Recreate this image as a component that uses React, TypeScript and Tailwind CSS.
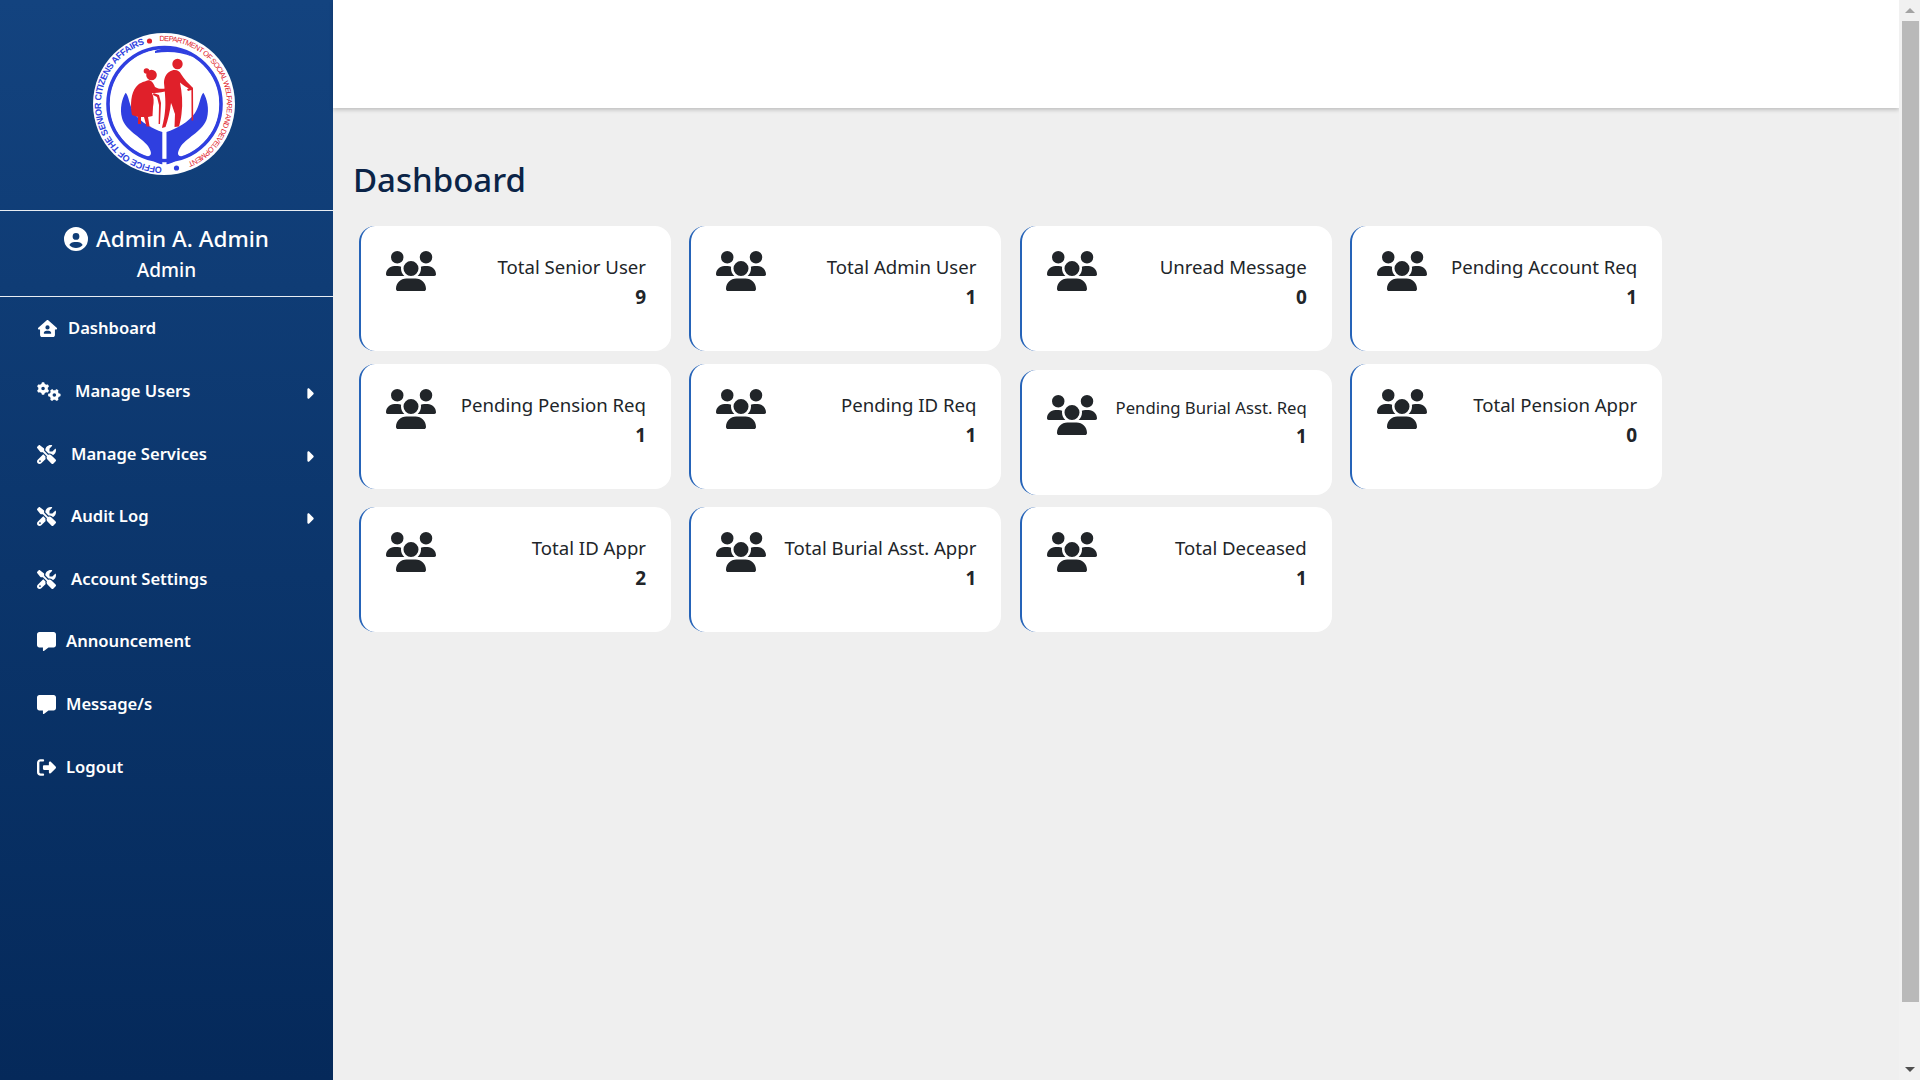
import React from "react";
import {
    FaCaretRight,
    FaCircleUser,
    FaGears,
    FaHouseUser,
    FaMessage,
    FaRightFromBracket,
    FaScrewdriverWrench,
    FaUsers,
} from "react-icons/fa6";

function Logo() {
    return (
        <svg width="142" height="142" viewBox="0 0 142 142" fill="none">
            <circle cx="71" cy="71" r="71" fill="white" />
            <path id="logo-ring" d="M71 134A63 63 0 1 1 71 8A63 63 0 1 1 71 134" />
            <text fontFamily="'Liberation Sans', sans-serif" fontSize="9" fontWeight="700" fill="#2f3fe0">
                <textPath href="#logo-ring" startOffset="2" textLength="176">
                    OFFICE OF THE SENIOR CITIZENS AFFAIRS
                </textPath>
            </text>
            <text fontFamily="'Liberation Sans', sans-serif" fontSize="7.4" fill="#e0202a">
                <textPath href="#logo-ring" startOffset="193" textLength="178">
                    DEPARTMENT OF SOCIAL WELFARE AND DEVELOPMENT
                </textPath>
            </text>
            <circle cx="56.5" cy="8" r="2.6" fill="#e0202a" />
            <circle cx="83.5" cy="135" r="2.6" fill="#2f3fe0" />
            <circle cx="71.5" cy="71" r="56.5" stroke="#2f3fe0" strokeWidth="3.6" />
            <circle cx="71.5" cy="71" r="54.5" fill="white" />
            <path d="M62 18C74 13 88 16 100 24C88 19 76 18 62 20Z" fill="#2f3fe0" />
            {/* hands */}
            <path
                d="M32.7 59.7C36 63 36 72 41 80C47 89 60 96 69.3 99L69.3 131.3C64 130.5 58 127 54 123.5C58 123 60 121 55 113C48 104 32 97 29 85C26.5 76 29 65 32.7 59.7Z"
                fill="#2f3fe0"
            />
            <path
                d="M110.3 59.7C107 63 107 72 102 80C96 89 83 96 73.5 99L73.5 131.3C79 130.5 85 127 88.5 123.5C85 123 83 121 88 113C95 104 111 97 114 85C116.5 76 114 65 110.3 59.7Z"
                fill="#2f3fe0"
            />
            {/* woman */}
            <circle cx="58.5" cy="42" r="5.3" fill="#e0202a" />
            <circle cx="53.5" cy="38" r="2.8" fill="#e0202a" />
            <path
                d="M53 48C57 46 60 49 62 54C65 56 69 56 72 55.5L72 58.5C67 60 62 60 59 60C61 64 61 69 60 74L59.5 83L55 84L56.5 93L58.5 93.5L53.5 93.5L51 84L48 84L48 91L45 91L45 84L39 82C37 72 38 60 43 54C46 50 50 49 53 48Z"
                fill="#e0202a"
            />
            <path d="M60.5 60L66 62L68 70L67 91L65.6 91L66 72L64 64L60 62Z" fill="#e0202a" />
            {/* man */}
            <circle cx="84.5" cy="31" r="5.2" fill="#e0202a" />
            <path
                d="M79 37.5C83 36 87 38 88 41C91 46 96 51 100 55L99 57C94 55 90 52 87 49.5C89 60 90 70 88.5 81C88 86 87 90 86 93.5L81.5 94L82 81C80 75 79 72 78 70C77 78 75 87 72.5 94L69 95C69.5 92 71.5 85 72 78C73 71 72 60 71 50C71 44 74 39 79 37.5Z"
                fill="#e0202a"
            />
            <path d="M94 56.5C96 54 99 54 100 55L100.2 87.5L98.6 87.5L98.4 57L95 58Z" fill="#e0202a" />
        </svg>
    );
}

type NavItem = { label: string; icon: React.ReactNode; gap: string; caret?: boolean };

const navItems: NavItem[] = [
    { label: "Dashboard", icon: <FaHouseUser className="w-[21px] h-[17px]" />, gap: "gap-[10px]" },
    { label: "Manage Users", icon: <FaGears className="w-[24px] h-[19px]" />, gap: "gap-[14px]", caret: true },
    { label: "Manage Services", icon: <FaScrewdriverWrench className="w-[19px] h-[19px]" />, gap: "gap-[15px]", caret: true },
    { label: "Audit Log", icon: <FaScrewdriverWrench className="w-[19px] h-[19px]" />, gap: "gap-[15px]", caret: true },
    { label: "Account Settings", icon: <FaScrewdriverWrench className="w-[19px] h-[19px]" />, gap: "gap-[15px]" },
    { label: "Announcement", icon: <FaMessage className="w-[19px] h-[19px]" />, gap: "gap-[10px]" },
    { label: "Message/s", icon: <FaMessage className="w-[19px] h-[19px]" />, gap: "gap-[10px]" },
    { label: "Logout", icon: <FaRightFromBracket className="w-[19px] h-[19px]" />, gap: "gap-[10px]" },
];

function Sidebar() {
    return (
        <aside className="w-[333px] h-full shrink-0 bg-linear-to-b from-[#13437f] to-[#05295a] text-white flex flex-col">
            <div className="h-[211px] pt-[33px] pr-[5px] flex justify-center border-b border-[#e8edf3]">
                <Logo />
            </div>
            <div className="h-[86px] border-b border-[#e8edf3] flex flex-col items-center pt-[11px]">
                <div className="flex items-center gap-[8px] text-[22.5px] leading-[34px] font-medium">
                    <FaCircleUser className="w-[24px] h-[24px]" />
                    Admin A. Admin
                </div>
                <div className="text-[19px] leading-[28px] font-medium">Admin</div>
            </div>
            <nav className="flex flex-col pt-[0.6px]">
                {navItems.map((item) => (
                    <div key={item.label} className="h-[62.6px] pl-[37px] pr-[18px] flex items-center justify-between">
                        <div className={`flex items-center font-semibold text-[16.6px] ${item.gap}`}>
                            {item.icon}
                            {item.label}
                        </div>
                        {item.caret && <FaCaretRight className="w-[11px] h-[17px] mt-[4px]" />}
                    </div>
                ))}
            </nav>
        </aside>
    );
}

type Stat = { title: string; value: number; small?: boolean };

const rows: Stat[][] = [
    [
        { title: "Total Senior User", value: 9 },
        { title: "Total Admin User", value: 1 },
        { title: "Unread Message", value: 0 },
        { title: "Pending Account Req", value: 1 },
    ],
    [
        { title: "Pending Pension Req", value: 1 },
        { title: "Pending ID Req", value: 1 },
        { title: "Pending Burial Asst. Req", value: 1, small: true },
        { title: "Total Pension Appr", value: 0 },
    ],
    [
        { title: "Total ID Appr", value: 2 },
        { title: "Total Burial Asst. Appr", value: 1 },
        { title: "Total Deceased", value: 1 },
    ],
];

function StatCard({ title, value, small }: Stat) {
    return (
        <div
            className={`w-[312px] h-[125px] bg-white rounded-2xl border-l-2 border-[#2563b8] pl-[25px] pr-[25px] pt-[25px] flex justify-between text-[#212529] ${
                small ? "mt-[6px]" : ""
            }`}
        >
            <FaUsers className="w-[50px] h-[40px] shrink-0" />
            <div className="text-right">
                {small ? (
                    <div className="text-[16.7px] leading-[26px]">{title}</div>
                ) : (
                    <div className="text-[18.6px] leading-[30px] mt-[1px]">{title}</div>
                )}
                <div className="text-[19px] font-bold leading-[30px]">{value}</div>
            </div>
        </div>
    );
}

function Scrollbar() {
    return (
        <div className="w-[21px] h-full shrink-0 bg-[#f1f1f1] flex flex-col items-center">
            <div className="h-[21px] flex items-center justify-center">
                <div className="w-0 h-0 border-x-[5px] border-x-transparent border-b-[5px] border-b-[#a3a3a3]" />
            </div>
            <div className="w-[17px] h-[981px] bg-[#b9b9b9] ml-[1px]" />
            <div className="flex-1 flex items-end pb-[8px]">
                <div className="w-0 h-0 border-x-[5px] border-x-transparent border-t-[5px] border-t-[#505050]" />
            </div>
        </div>
    );
}

export default function App() {
    return (
        <div className="h-screen flex overflow-hidden bg-[#efefef] font-['Noto_Sans',sans-serif]">
            <Sidebar />
            <main className="flex-1 h-full flex flex-col">
                <div className="h-[108px] bg-white shadow-[0_2px_4px_rgba(0,0,0,0.2)]" />
                <div className="pl-[20px] pt-[50px]">
                    <h1 className="text-[33px] leading-[44px] font-medium text-[#0b2447]">Dashboard</h1>
                    <div className="pl-[6px] pt-[24px] flex flex-col">
                        {rows.map((row, i) => (
                            <div key={i} className="flex items-start gap-[18.4px] mb-[12.5px]">
                                {row.map((s) => (
                                    <StatCard key={s.title} {...s} />
                                ))}
                            </div>
                        ))}
                    </div>
                </div>
            </main>
            <Scrollbar />
        </div>
    );
}
